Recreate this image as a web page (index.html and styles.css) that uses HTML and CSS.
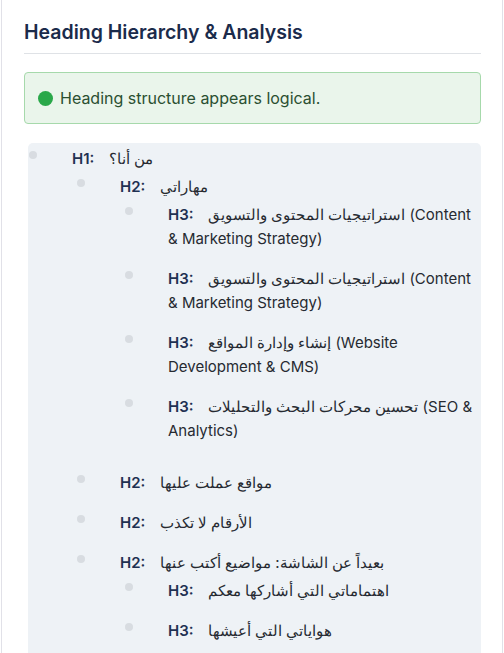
FILE: index.html
```html
<!DOCTYPE html>
<html lang="en">
<head>
<meta charset="utf-8">
<title>Heading Hierarchy &amp; Analysis</title>
<link rel="stylesheet" href="styles.css">
</head>
<body>
<div class="card">
  <h2 class="title">Heading Hierarchy &amp; Analysis</h2>
  <div class="alert">
    <span class="dot"></span>
    <span class="alert-text">Heading structure appears logical.</span>
  </div>
  <div class="tree">
    <ul class="outline">
      <li><span class="tag">H1:</span> من أنا؟
        <ul>
          <li><span class="tag">H2:</span> مهاراتي
            <ul>
              <li><span class="tag">H3:</span> استراتيجيات المحتوى والتسويق (Content &amp; Marketing Strategy)</li>
              <li><span class="tag">H3:</span> استراتيجيات المحتوى والتسويق (Content &amp; Marketing Strategy)</li>
              <li><span class="tag">H3:</span> إنشاء وإدارة المواقع (Website Development &amp; CMS)</li>
              <li><span class="tag">H3:</span> تحسين محركات البحث والتحليلات (SEO &amp; Analytics)</li>
            </ul>
          </li>
          <li><span class="tag">H2:</span> مواقع عملت عليها</li>
          <li><span class="tag">H2:</span> الأرقام لا تكذب</li>
          <li><span class="tag">H2:</span> بعيداً عن الشاشة: مواضيع أكتب عنها
            <ul>
              <li><span class="tag">H3:</span> اهتماماتي التي أشاركها معكم</li>
              <li><span class="tag">H3:</span> هواياتي التي أعيشها</li>
            </ul>
          </li>
        </ul>
      </li>
    </ul>
  </div>
</div>
</body>
</html>
```

FILE: styles.css
```css
html, body {
  margin: 0;
  padding: 0;
  background: #ffffff;
}

body {
  font-family: Inter, "Noto Sans", sans-serif;
  color: #2b2f36;
}

.card {
  margin: 0 1px;
  padding: 18px 21px 40px 22px;
  border-left: 1px solid #e1e1e8;
  border-right: 1px solid #e1e1e8;
  min-height: 700px;
}

.title {
  margin: 0;
  padding-bottom: 7px;
  font-size: 19.5px;
  line-height: 28px;
  font-weight: 600;
  color: #1b2b4b;
  border-bottom: 1px solid #dfe2e6;
}

.alert {
  margin-top: 18px;
  display: flex;
  align-items: center;
  gap: 7px;
  padding: 13px;
  background: #eaf5eb;
  border: 1px solid #a6d9ab;
  border-radius: 4px;
  font-size: 16px;
  line-height: 24px;
  color: #2a4f31;
}

.dot {
  width: 15px;
  height: 15px;
  border-radius: 50%;
  background: #2aa84a;
  flex: none;
}

.tree {
  margin: 19px 0 0 4px;
  padding: 0 6px 12px 0;
  background: #eef2f6;
  border-radius: 5px;
}

.tree ul {
  list-style: none;
  margin: 0;
  padding: 0 0 0 48px;
}

.tree .outline {
  padding-left: 44px;
}

.tree li {
  position: relative;
  padding: 4px 0;
  margin-bottom: 8px;
  font-size: 15px;
  line-height: 24px;
  color: #262a31;
}

.tree li::before {
  content: "";
  position: absolute;
  left: -43px;
  top: 8px;
  width: 8px;
  height: 8px;
  border-radius: 50%;
  background: #d8dce1;
}

.tag {
  font-weight: 600;
  color: #1f3152;
  margin-right: 10px;
}
```
